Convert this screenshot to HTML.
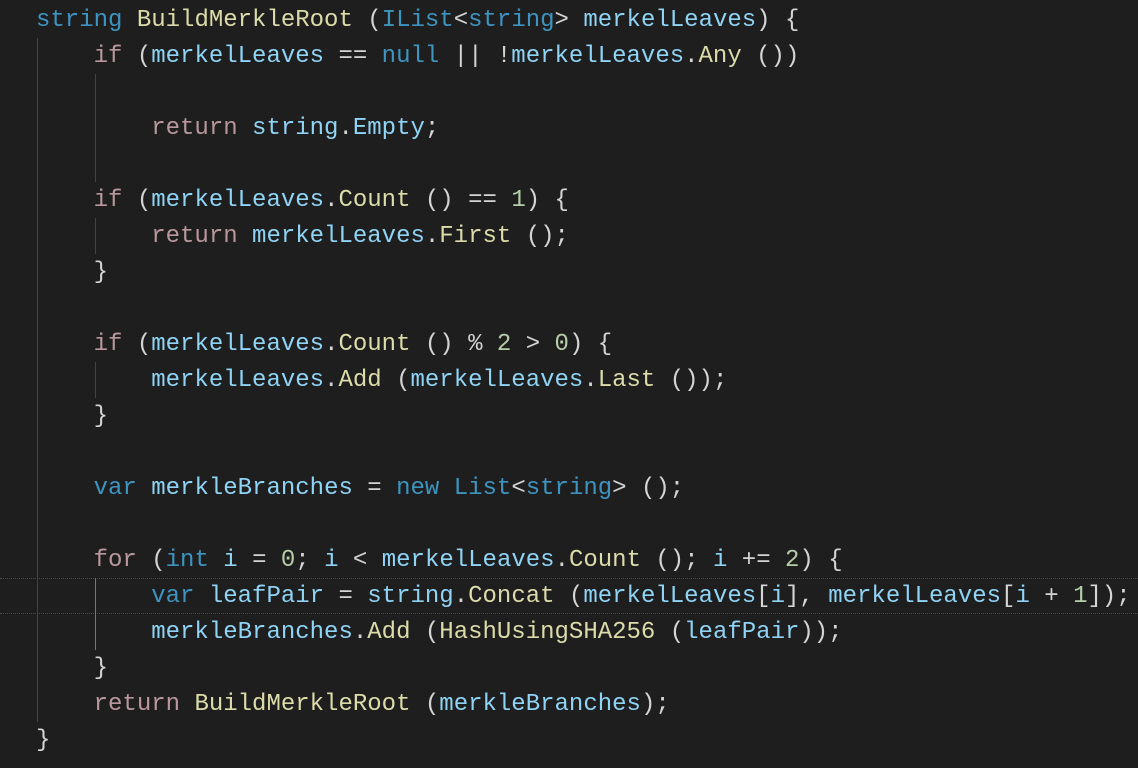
<!DOCTYPE html>
<html><head><meta charset="utf-8"><style>
html,body{margin:0;padding:0;background:#1e1e1e;width:1138px;height:768px;overflow:hidden}
pre{margin:0;position:absolute;left:36px;top:3px;font-family:"Liberation Mono",monospace;font-size:24px;line-height:36px;color:#d4d4d4;white-space:pre}
.k{color:#3e94c0}.c{color:#b9979c}.v{color:#8fd3f5}.f{color:#dcdcaa}.n{color:#b5cea8}
.g{position:absolute;width:0;border-left:1px solid #444}
.hl{position:absolute;left:0;width:1138px;height:34px;top:578px;border-top:1px dotted #4a4a4a;border-bottom:1px dotted #4a4a4a}
</style></head><body>
<div class="hl"></div>
<div class="g" style="left:37px;top:38px;height:684px"></div>
<div class="g" style="left:95px;top:74px;height:108px"></div>
<div class="g" style="left:95px;top:218px;height:36px"></div>
<div class="g" style="left:95px;top:362px;height:36px"></div>
<div class="g" style="left:95px;top:578px;height:72px;border-color:#777"></div>
<pre><span class="k">string</span> <span class="f">BuildMerkleRoot</span> (<span class="k">IList</span>&lt;<span class="k">string</span>&gt; <span class="v">merkelLeaves</span>) {
    <span class="c">if</span> (<span class="v">merkelLeaves</span> == <span class="k">null</span> || !<span class="v">merkelLeaves</span>.<span class="f">Any</span> ())

        <span class="c">return</span> <span class="v">string</span>.<span class="v">Empty</span>;

    <span class="c">if</span> (<span class="v">merkelLeaves</span>.<span class="f">Count</span> () == <span class="n">1</span>) {
        <span class="c">return</span> <span class="v">merkelLeaves</span>.<span class="f">First</span> ();
    }

    <span class="c">if</span> (<span class="v">merkelLeaves</span>.<span class="f">Count</span> () % <span class="n">2</span> &gt; <span class="n">0</span>) {
        <span class="v">merkelLeaves</span>.<span class="f">Add</span> (<span class="v">merkelLeaves</span>.<span class="f">Last</span> ());
    }

    <span class="k">var</span> <span class="v">merkleBranches</span> = <span class="k">new</span> <span class="k">List</span>&lt;<span class="k">string</span>&gt; ();

    <span class="c">for</span> (<span class="k">int</span> <span class="v">i</span> = <span class="n">0</span>; <span class="v">i</span> &lt; <span class="v">merkelLeaves</span>.<span class="f">Count</span> (); <span class="v">i</span> += <span class="n">2</span>) {
        <span class="k">var</span> <span class="v">leafPair</span> = <span class="v">string</span>.<span class="f">Concat</span> (<span class="v">merkelLeaves</span>[<span class="v">i</span>], <span class="v">merkelLeaves</span>[<span class="v">i</span> + <span class="n">1</span>]);
        <span class="v">merkleBranches</span>.<span class="f">Add</span> (<span class="f">HashUsingSHA256</span> (<span class="v">leafPair</span>));
    }
    <span class="c">return</span> <span class="f">BuildMerkleRoot</span> (<span class="v">merkleBranches</span>);
}</pre>
</body></html>
